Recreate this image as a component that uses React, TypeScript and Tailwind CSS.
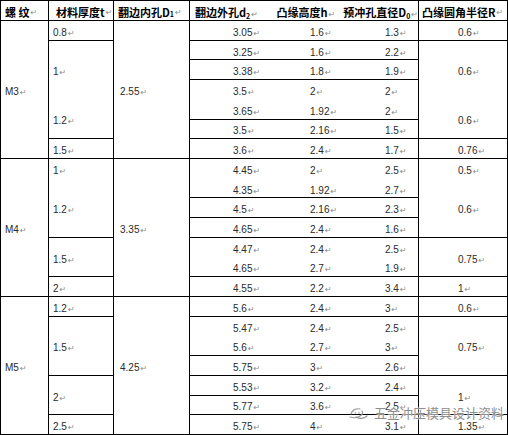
import React from "react";

type Item = { span: number; text: string };
type Group = { rows: number; items: Item[] };
type MidRow = { d: string; h: string; o: string; b: boolean };
type Section = {
  name: string;
  d1: string;
  col2: Group[];
  colR: Group[];
  mid: MidRow[];
};

const SPAN: Record<number, string> = {
  1: "row-span-1",
  2: "row-span-2",
  3: "row-span-3",
  4: "row-span-4",
  5: "row-span-5",
  6: "row-span-6",
  7: "row-span-7",
};
const ROWS: Record<number, string> = {
  1: "grid-rows-1",
  2: "grid-rows-2",
  3: "grid-rows-3",
  4: "grid-rows-4",
  5: "grid-rows-5",
  6: "grid-rows-6",
  7: "grid-rows-7",
};

const sections: Section[] = [
  {
    name: "M3",
    d1: "2.55",
    col2: [
      { rows: 1, items: [{ span: 1, text: "0.8" }] },
      { rows: 5, items: [{ span: 3, text: "1" }, { span: 2, text: "1.2" }] },
      { rows: 1, items: [{ span: 1, text: "1.5" }] },
    ],
    colR: [
      { rows: 1, items: [{ span: 1, text: "0.6" }] },
      { rows: 5, items: [{ span: 3, text: "0.6" }, { span: 2, text: "0.6" }] },
      { rows: 1, items: [{ span: 1, text: "0.76" }] },
    ],
    mid: [
      { d: "3.05", h: "1.6", o: "1.3", b: true },
      { d: "3.25", h: "1.6", o: "2.2", b: true },
      { d: "3.38", h: "1.8", o: "1.9", b: true },
      { d: "3.5", h: "2", o: "2", b: false },
      { d: "3.65", h: "1.92", o: "2", b: true },
      { d: "3.5", h: "2.16", o: "1.5", b: true },
      { d: "3.6", h: "2.4", o: "1.7", b: true },
    ],
  },
  {
    name: "M4",
    d1: "3.35",
    col2: [
      { rows: 4, items: [{ span: 1, text: "1" }, { span: 3, text: "1.2" }] },
      { rows: 2, items: [{ span: 2, text: "1.5" }] },
      { rows: 1, items: [{ span: 1, text: "2" }] },
    ],
    colR: [
      { rows: 4, items: [{ span: 1, text: "0.5" }, { span: 3, text: "0.6" }] },
      { rows: 2, items: [{ span: 2, text: "0.75" }] },
      { rows: 1, items: [{ span: 1, text: "1" }] },
    ],
    mid: [
      { d: "4.45", h: "2", o: "2.5", b: false },
      { d: "4.35", h: "1.92", o: "2.7", b: true },
      { d: "4.5", h: "2.16", o: "2.3", b: true },
      { d: "4.65", h: "2.4", o: "1.6", b: true },
      { d: "4.47", h: "2.4", o: "2.5", b: false },
      { d: "4.65", h: "2.7", o: "1.9", b: true },
      { d: "4.55", h: "2.2", o: "3.4", b: true },
    ],
  },
  {
    name: "M5",
    d1: "4.25",
    col2: [
      { rows: 1, items: [{ span: 1, text: "1.2" }] },
      { rows: 3, items: [{ span: 3, text: "1.5" }] },
      { rows: 2, items: [{ span: 2, text: "2" }] },
      { rows: 1, items: [{ span: 1, text: "2.5" }] },
    ],
    colR: [
      { rows: 1, items: [{ span: 1, text: "0.6" }] },
      { rows: 3, items: [{ span: 3, text: "0.75" }] },
      { rows: 2, items: [{ span: 2, text: "1" }] },
      { rows: 1, items: [{ span: 1, text: "1.35" }] },
    ],
    mid: [
      { d: "5.6", h: "2.4", o: "3", b: true },
      { d: "5.47", h: "2.4", o: "2.5", b: false },
      { d: "5.6", h: "2.7", o: "3", b: true },
      { d: "5.75", h: "3", o: "2.6", b: true },
      { d: "5.53", h: "3.2", o: "2.4", b: true },
      { d: "5.77", h: "3.6", o: "2.5", b: true },
      { d: "5.75", h: "4", o: "3.1", b: true },
    ],
  },
];

const Mark = () => (
  <span className="text-[8px] font-normal text-[#8a8a8a] font-['DejaVu_Sans',sans-serif] ml-[1px]">↵</span>
);

const V = ({ t }: { t: string }) => (
  <span className="whitespace-nowrap">
    {t}
    <Mark />
  </span>
);

const Sub = ({ t }: { t: string }) => (
  <span className="text-[7px] font-bold relative top-[2px]">{t}</span>
);

function GroupCol({ groups, pad }: { groups: Group[]; pad: string }) {
  return (
    <div className="grid grid-rows-7 border-r border-black">
      {groups.map((g, i) => (
        <div key={i} className={`${SPAN[g.rows]} grid ${ROWS[g.rows]} border-b border-black`}>
          {g.items.map((it, j) => (
            <div key={j} className={`${SPAN[it.span]} flex items-center pt-[5px] ${pad}`}>
              <V t={it.text} />
            </div>
          ))}
        </div>
      ))}
    </div>
  );
}

export default function App() {
  return (
    <div className="relative w-[508px] h-[435px] bg-white border-l border-t border-black overflow-hidden font-['Liberation_Sans',sans-serif] text-[10px] text-[#2a2a2a] leading-none">
      {/* header */}
      <div className="grid grid-cols-[48px_65px_76px_229px_89px] h-[20px] font-['Noto_Sans_CJK_SC',sans-serif] font-bold text-[11px] text-black">
        <div className="border-r border-b border-black flex items-center pt-[4px] pl-[4px] whitespace-nowrap">
          螺&nbsp;纹<Mark />
        </div>
        <div className="border-r border-b border-black flex items-center pt-[4px] pl-[7px] whitespace-nowrap">
          材料厚度t<Mark />
        </div>
        <div className="border-r border-b border-black flex items-center pt-[4px] pl-[4px] whitespace-nowrap">
          翻边内孔D<Sub t="1" />
          <Mark />
        </div>
        <div className="border-r border-b border-black flex items-center pt-[4px] whitespace-nowrap">
          <div className="w-[89px] pl-[5px]">
            翻边外孔d<Sub t="2" />
            <Mark />
          </div>
          <div className="w-[69px]">
            凸缘高度h<Mark />
          </div>
          <div>
            预冲孔直径D<Sub t="0" />
            <Mark />
          </div>
        </div>
        <div className="border-r border-b border-black flex items-center pt-[4px] pl-[3px] whitespace-nowrap">
          凸缘圆角半径R<Mark />
        </div>
      </div>

      {sections.map((s) => (
        <div key={s.name} className="grid grid-cols-[48px_65px_76px_229px_89px] h-[138px]">
          <div className="border-r border-b border-black flex items-center pt-[5px] pl-[4px]">
            <V t={s.name} />
          </div>
          <GroupCol groups={s.col2} pad="pl-[4px]" />
          <div className="border-r border-b border-black flex items-center pt-[5px] pl-[6px]">
            <V t={s.d1} />
          </div>
          <div className="grid grid-rows-7 border-r border-black">
            {s.mid.map((r, i) => (
              <div
                key={i}
                className={`flex items-center pt-[5px] ${r.b ? "border-b border-black" : ""}`}
              >
                <div className="w-[120px] pl-[43px]">
                  <V t={r.d} />
                </div>
                <div className="w-[75px]">
                  <V t={r.h} />
                </div>
                <div>
                  <V t={r.o} />
                </div>
              </div>
            ))}
          </div>
          <GroupCol groups={s.colR} pad="pl-[39px]" />
        </div>
      ))}

      {/* watermark */}
      <div className="absolute left-[347px] top-[404px] flex items-center gap-[4px] pointer-events-none">
        <svg width="22" height="15" viewBox="0 0 22 15" fill="none" stroke="#9a9a9a" strokeWidth="1.2">
          <path d="M3 9c1-4 5-6 9-5" strokeLinecap="round" />
          <path d="M2 12c3 1 7 1 10-1 2-1 3-3 2-5" strokeLinecap="round" />
          <path d="M8 12c3 2 8 2 11-1" strokeLinecap="round" />
          <circle cx="7.5" cy="8" r="0.8" fill="#9a9a9a" stroke="none" />
          <circle cx="11" cy="8" r="0.8" fill="#9a9a9a" stroke="none" />
        </svg>
        <span className="font-['Noto_Sans_CJK_SC',sans-serif] text-[13px] leading-none text-[#8e8e8e] whitespace-nowrap [text-shadow:0_0_2px_#fff,0_0_2px_#fff]">
          五金冲压模具设计资料
        </span>
      </div>
    </div>
  );
}
